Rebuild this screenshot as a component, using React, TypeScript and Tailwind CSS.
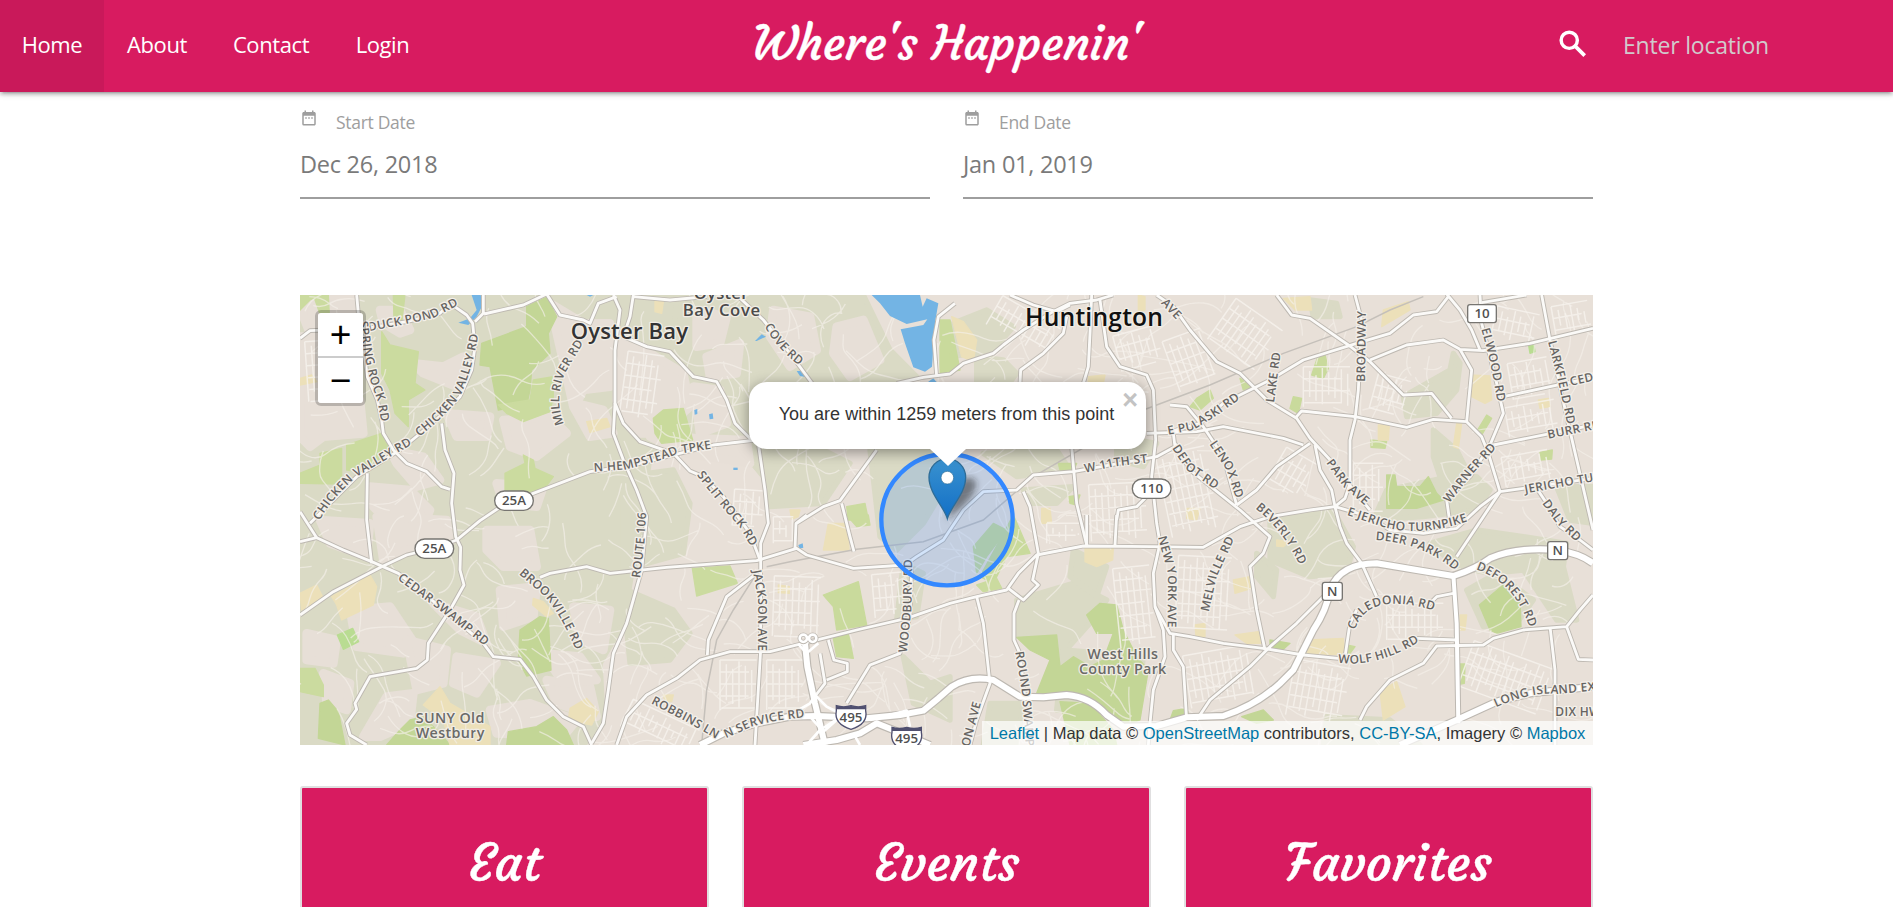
import React from "react";
import { MdDateRange } from "react-icons/md";

/* Map artwork uses a canvas of 3 units per pixel. */

const woods = [
  "30,15 1500,15 1480,200 1380,440 1180,420 1080,500 1060,640 1000,1000 930,1120 940,1300 880,1365 30,1365",
  "1160,15 1720,15 1800,180 1880,260 1700,300 1400,430 1250,260 1150,170",
  "1000,560 1150,540 1200,640 1180,790 1000,840",
  "1330,450 1560,460 1680,520 1600,640 1440,650 1420,560",
  "1740,480 1960,470 1960,600 1900,700 1820,780 1770,740",
  "1990,100 2090,60 2170,110 2110,180 1985,200",
  "2060,200 2140,210 2180,250 2150,290 2060,280",
  "2080,490 2300,480 2340,540 2180,560",
  "2200,600 2350,590 2300,640 2220,640",
  "2180,930 2350,880 2450,930 2400,1000 2310,1100 2290,1030 2180,1040",
  "2320,1080 2560,1100 2540,1270 2300,1260",
  "2350,780 2450,830 2420,920 2340,860",
  "3340,320 3480,240 3490,190 3510,220 3500,300 3440,370 3350,380",
  "3290,600 3480,560 3560,560 3600,600 3560,660 3400,680 3250,690",
  "3430,420 3500,480 3540,560 3460,590 3430,500",
  "2940,690 3130,660 3190,770 3170,850 3060,860 2940,810",
  "3420,760 3560,720 3700,740 3830,760 3820,830 3860,990 3800,990 3700,840 3600,850 3500,830",
  "3110,1280 3300,1290 3390,1365 3100,1365",
  "3530,900 3620,850 3730,930 3680,1000 3580,1010",
  "2900,790 2960,840 2950,920 2900,860",
  "1010,900 1150,960 1200,1030 1140,1110 1020,1120 1010,1020",
  "1840,1100 1920,1180 1980,1160 1980,1290 1870,1240",
  "1840,820 1900,850 1880,980 1820,990",
  "2480,440 2600,460 2560,530 2480,510",
  "3060,30 3140,40 3150,80 3070,80",
  "3800,590 3909,590 3909,700 3840,690",
  "2100,1240 2200,1240 2180,1365 2080,1365",
];

const towns = [
  "40,30 190,20 190,110 60,130 40,80",
  "30,140 90,140 120,250 210,330 220,430 100,440 60,470 30,440",
  "270,60 330,60 360,120 330,130 280,100",
  "370,220 460,230 520,200 540,230 500,290 400,250",
  "300,480 400,500 450,570 380,590 320,520",
  "470,370 600,380 590,440 500,440",
  "640,390 780,380 830,430 740,500 660,470",
  "780,40 880,100 960,100 960,290 880,300 860,340 940,360 970,430 900,440 850,350",
  "240,590 360,600 420,660 400,710 300,700 250,650",
  "90,690 240,700 230,800 120,760",
  "260,680 470,690 480,760 350,780 280,810",
  "590,720 720,720 740,830 640,830 590,780",
  "50,1030 140,1050 130,1120 50,1110",
  "180,960 300,950 380,1070 340,1090 200,1070",
  "350,1050 470,1080 460,1180 380,1200",
  "430,940 560,980 590,1060 510,1020",
  "630,900 740,890 730,980 640,1010",
  "500,1100 620,1120 560,1210 490,1180",
  "100,1150 180,1180 170,1260 110,1240",
  "290,1220 370,1210 360,1300 270,1340 220,1340",
  "600,1260 720,1240 860,1290 820,1340 620,1330",
  "770,1170 900,1190 920,1280 800,1240",
  "850,950 960,960 940,1080 870,1050",
  "990,130 1080,190 1180,250 1200,350 1110,430 1040,430 980,330",
  "1220,60 1310,80 1290,160 1220,170",
  "1250,200 1350,160 1340,250 1260,260",
  "1450,60 1560,80 1580,180 1500,230 1440,140",
  "1640,110 1720,90 1770,210 1680,260 1630,190",
  "1080,440 1370,450 1380,520 1180,490",
  "1210,290 1290,300 1310,400 1230,430",
  "620,580 760,590 740,650 640,640",
  "760,1090 870,1100 920,1170 820,1180",
];

const parks = [
  ["#cbdb9f", "30,60 60,30 90,15 30,15"],
  ["#cbdb9f", "70,15 115,15 118,75 90,72"],
  ["#cbdb9f", "310,15 345,15 335,100 312,95"],
  ["#cbdb9f", "275,125 300,165 385,185 375,280 405,300 355,330 355,410 315,370 300,300 275,250"],
  ["#c3d696", "710,50 770,22 800,80 775,130 780,190 725,240 720,300 710,345 625,360 600,230 570,225 575,160 710,110"],
  ["#cbdb9f", "625,345 720,330 730,270 790,260 790,320 780,365 700,395 650,370"],
  ["#cbdb9f", "170,465 275,430 315,475 210,545 170,540"],
  ["#cbdb9f", "90,490 155,475 155,582 30,580 30,550 90,525"],
  ["#cbdb9f", "645,550 705,520 700,495 730,510 735,535 790,560 760,600 720,605 645,600"],
  ["#b9dc92", "142,1035 188,1015 206,1055 160,1078"],
  ["#cbdb9f", "30,1135 75,1135 100,1185 100,1220 30,1205"],
  ["#c3d696", "90,1240 115,1230 145,1265 165,1365 85,1345"],
  ["#c3d696", "690,1020 750,980 775,985 783,1140 710,1158 685,1110"],
  ["#c3d696", "360,1290 400,1280 440,1320 480,1365 290,1365 330,1320"],
  ["#c3d696", "655,1325 740,1310 790,1280 830,1320 850,1365 650,1365"],
  ["#c9da9c", "1090,385 1120,360 1180,355 1208,450 1115,460 1095,430"],
  ["#cbdb9f", "1207,835 1320,828 1342,880 1220,918"],
  ["#c9da9c", "1600,915 1705,875 1730,1005 1640,1020 1630,950"],
  ["#c9da9c", "1630,1045 1675,1030 1690,1105 1640,1100"],
  ["#cbdb9f", "1670,675 1735,675 1740,705 1700,710"],
  ["#cbdb9f", "1670,650 1725,640 1735,690 1675,690"],
  ["#c9da9c", "1950,90 1980,90 2010,240 1950,250"],
  ["#c9da9c", "2170,675 2220,790 2150,800 2110,880 2070,860"],
  ["#c9da9c", "2050,770 2110,700 2150,720 2090,800 2060,850"],
  ["#cbdb9f", "2060,885 2120,865 2135,895 2080,905"],
  ["#c3d696", "2180,1042 2300,1035 2310,1130 2350,1100 2400,1130 2440,1110 2470,1030 2420,1030 2390,975 2430,940 2480,945 2500,1020 2540,1100 2575,1140 2550,1290 2500,1310 2400,1230 2240,1210 2280,1110 2220,1080"],
  ["#c3d696", "2310,1235 2400,1240 2470,1320 2480,1365 2340,1365"],
  ["#c9da9c", "2720,325 2760,300 2770,325 2730,360 2700,350"],
  ["#c9da9c", "2850,265 2885,290 2860,300"],
  ["#c9da9c", "2305,520 2360,520 2350,545 2310,540"],
  ["#c9da9c", "2335,620 2370,615 2360,645 2340,640"],
  ["#c9da9c", "3085,195 3105,195 3115,235 3100,265 3065,255"],
  ["#c9da9c", "3010,320 3035,325 3025,370 3000,355"],
  ["#c9da9c", "3590,375 3605,385 3575,435 3560,425"],
  ["#b9dc92", "3715,160 3730,155 3735,185 3720,190"],
  ["#c3d696", "3290,555 3315,555 3320,590 3390,590 3415,560 3440,610 3460,630 3380,655 3290,655"],
  ["#c9da9c", "3243,450 3290,455 3285,475 3243,472"],
  ["#c9da9c", "3750,487 3787,480 3785,507 3752,510"],
  ["#c3d696", "3568,945 3640,885 3690,940 3693,1010 3620,1030 3600,1020"],
  ["#c9da9c", "3508,1122 3525,1122 3523,1180 3508,1183"],
  ["#c9da9c", "3170,1065 3195,1070 3180,1090 3165,1090"],
  ["#c3d696", "2940,1050 3000,1060 2980,1078 2940,1078"],
  ["#c3d696", "2650,1262 2690,1255 2700,1290 2640,1290"],
  ["#c3d696", "2855,1280 2920,1260 2950,1290 2900,1300"],
  ["#c9da9c", "1980,150 1990,180 1980,200"],
  ["#ece0b9", "30,265 65,255 80,275 30,285"],
  ["#ece0b9", "890,395 950,385 960,410 900,428"],
  ["#ece0b9", "30,910 80,885 100,925 35,960"],
  ["#ece0b9", "125,920 240,855 260,890 250,945 155,990 140,945"],
  ["#ece0b9", "400,1245 450,1190 480,1240 600,1310 600,1365 480,1365 460,1290"],
  ["#ece0b9", "730,925 760,935 790,970 770,980 728,945"],
  ["#ece0b9", "840,1255 890,1225 925,1265 905,1305 835,1290"],
  ["#ece0b9", "1095,25 1120,35 1115,70 1095,65"],
  ["#ece0b9", "1615,700 1675,700 1677,780 1600,780"],
  ["#ece0b9", "1465,885 1498,890 1498,910 1465,908"],
  ["#ece0b9", "1500,660 1530,660 1525,680 1505,688"],
  ["#ece0b9", "1120,1215 1150,1215 1145,1235 1125,1235"],
  ["#ece0b9", "1985,80 2020,95 2060,150 2050,215 2015,200"],
  ["#ece0b9", "2545,15 2565,20 2565,60 2545,65"],
  ["#ece0b9", "2395,260 2445,255 2440,280 2395,280"],
  ["#ece0b9", "2385,775 2470,775 2468,810 2420,830 2385,815"],
  ["#ece0b9", "2255,655 2280,655 2285,700 2255,700"],
  ["#ece0b9", "2690,655 2730,655 2720,690 2690,685"],
  ["#ece0b9", "2830,870 2880,860 2885,895 2835,910"],
  ["#ece0b9", "2715,1005 2745,1000 2745,1040 2718,1040"],
  ["#ece0b9", "2835,1035 2905,1025 2915,1060 2870,1060"],
  ["#ece0b9", "2980,25 3060,20 3065,60 3015,60"],
  ["#ece0b9", "3280,60 3355,35 3360,60 3275,110"],
  ["#ece0b9", "3540,255 3600,258 3605,330 3585,340 3545,320"],
  ["#ece0b9", "3265,405 3298,405 3295,450 3265,450"],
  ["#ece0b9", "3500,400 3515,400 3505,475 3490,470"],
  ["#ece0b9", "3745,330 3775,325 3780,350 3750,355"],
  ["#ece0b9", "3055,1050 3160,1045 3165,1095 3050,1090"],
  ["#ece0b9", "3510,975 3530,975 3525,1020 3510,1020"],
  ["#ece0b9", "3270,1205 3320,1175 3345,1250 3280,1290"],
  ["#ece0b9", "2960,750 2995,755 2980,770 2960,768"],
];

const water = [
  "1745,15 1890,15 1898,50 1910,25 1945,40 1936,92 1926,230 1905,245 1870,232 1845,160 1832,118 1900,105 1912,88 1850,102 1800,78 1770,40",
  "545,15 572,15 578,45 560,80 535,105 505,98 540,85 560,60",
  "1395,153 1415,133 1428,140 1400,153",
  "1520,243 1538,243 1550,262 1530,258",
  "1213,360 1222,357 1222,372 1214,374",
  "1257,373 1268,370 1270,386 1259,388",
  "1330,533 1343,533 1343,540 1330,540",
  "1525,765 1538,760 1540,773 1528,776",
  "1915,275 1930,265 1943,280 1920,285",
  "890,15 910,15 900,20",
];

const roads = [
  "M200 15L205 70L215 130L232 260L262 330L275 390L280 430L310 480L350 520L410 545L455 590L480 598",
  "M30 145L60 122L230 115L350 95L450 70L480 40L530 75L548 100L555 170L545 240L510 320L460 370L385 435L330 480L200 560L120 640L60 700",
  "M30 755L80 743L30 665",
  "M80 743L160 780L245 815L325 850L450 950L580 1060L610 1100L690 1108L730 1160L770 1230L820 1280L880 1310L905 1365",
  "M232 550L230 690L245 820",
  "M30 975L130 905L275 830L350 795L430 775L500 750L570 692L640 645L730 610L900 545L1010 530L1130 500L1270 465L1400 450",
  "M455 400L465 480L492 550L485 640L497 740L512 772L510 840L522 885L480 960L415 1060L412 1110L380 1135L240 1160L195 1240L200 1258L170 1300L180 1335L230 1365",
  "M580 15L580 70L555 95M582 72L700 45L770 12L810 75L880 90L900 100L925 40L980 20",
  "M970 15L990 60L975 180L975 340L1000 400L1050 455L1150 490L1200 543L1240 560L1300 620L1380 730L1410 810",
  "M975 340L970 430L1000 510L1040 600L1070 680L1055 840L1010 1000L970 1090L955 1200L940 1300L905 1360",
  "M1030 15L1020 80L1000 140L1070 170L1140 185L1210 260L1280 275L1310 330L1335 400L1380 445L1405 460L1425 600L1435 700L1412 760L1412 1080L1395 1365",
  "M1030 20L1140 30L1250 20",
  "M750 862L780 850L890 830L960 850L1130 832L1400 812L1520 775L1550 795L1690 835L1845 825L1880 800L1960 750L2020 660L2080 605L2180 600L2230 555L2350 545L2600 500L2655 470L2650 430",
  "M1400 850L1310 920L1255 1050L1252 1095",
  "M980 1365L1010 1280L1070 1215L1160 1165L1230 1110L1320 1085L1440 1085L1560 1055L1700 1020L1850 985L1980 940L2060 920L2150 900L2185 850L2240 795L2380 768L2590 770L2740 772L2850 710L2940 680L3060 660L3135 650L3240 680L3300 720L3400 730L3500 715L3570 650L3630 605L3700 595L3909 565",
  "M1340 15L1420 90L1500 190L1570 285",
  "M1520 700L1600 650L1650 632L1760 480M1655 640L1680 740L1692 785M1515 775L1518 700L1550 675",
  "M1940 260L1932 150L1945 80L1995 40M1820 280L1900 262L1980 252L2020 220L2110 190L2140 165L2200 120L2280 70L2340 40L2420 30L2470 15",
  "M2160 15L2230 45L2300 65L2340 45M2405 15L2400 130L2395 230L2380 280M2330 80L2320 130L2260 190L2192 240L2190 280",
  "M2430 30L2450 170L2490 230L2570 255L2590 300L2597 450L2585 560L2600 700L2610 760L2590 850L2595 950L2620 1020L2625 1100L2590 1200L2580 1300L2575 1365",
  "M2345 470L2360 640L2390 765M2200 605L2220 650L2245 790L2228 870L2245 885L2200 930L2155 895",
  "M2570 430L2720 425L2800 410L2980 445L3040 465",
  "M2600 15L2650 50L2700 120L2780 215L2850 250L2930 330L3020 385L3060 445L3130 520L3190 600L3240 660",
  "M2640 425L2730 400L2800 340L2900 290L2940 270L3040 210L3200 160L3300 130L3370 75L3440 65L3475 20",
  "M3470 12L3510 60L3545 120L3570 180M3240 210L3350 165L3460 150L3510 178L3580 182L3720 160L3909 115",
  "M3510 178L3545 240L3530 395",
  "M2960 15L3005 75L3060 85L3175 165L3240 215L3340 315L3425 310L3485 385",
  "M3015 385L3035 363L3195 380L3350 412L3430 388L3530 395L3575 440L3595 490L3630 605",
  "M3195 15L3215 90L3205 300L3195 390L3180 450L3180 580L3165 625L3135 650",
  "M3075 465L3090 540L3125 600L3135 650L3150 710L3170 760L3215 820L3260 920",
  "M3570 15L3575 100L3620 280L3640 370L3600 465L3540 560L3470 630L3480 700",
  "M3755 15L3780 150L3830 380L3909 720M3640 320L3909 262M3595 468L3909 405M3575 38L3710 15",
  "M3740 595L3770 640L3810 710L3870 750L3909 780M3630 605L3580 680L3500 800",
  "M2640 345L2690 350L2740 410L2800 500L2840 645M2655 460L2700 540L2800 620L2850 660L2940 740L2920 790L2880 830L2900 960L2925 1080",
  "M2840 645L2900 600L2960 530L3060 460M2480 690L2485 660L2540 650L2590 600",
  "M2187 930L2172 970L2172 1050L2190 1090L2205 1230",
  "M2060 920L2080 1000L2100 1180L2060 1290L2040 1365M2390 675L2390 765M2480 675L2475 765",
  "M2595 950L2640 1030L2700 1040L2800 1060L2920 1075L3040 1095L3145 1105",
  "M2650 1030L2650 1080L2680 1130L2690 1290M2720 1290L2760 1230L2880 1130L2940 1070L3020 1000L3100 920",
  "M3165 1100L3180 1000L3200 960M3410 950L3440 920L3490 910M3380 1045L3500 1050",
  "M3210 1290L3230 1250L3300 1170L3400 1120L3440 1068L3580 1065L3610 1045L3700 1020L3830 1010L3870 960L3909 915M3780 1010L3795 1140L3795 1365M3830 1010L3865 1108L3909 1110",
  "M1865 830L1860 980L1830 1090L1740 1125L1670 1240M1615 1050L1632 1110L1672 1120L1672 1145L1610 1170M1590 1090L1605 1180L1570 1225",
];

const highways = [
  "M1230 1365L1300 1330L1400 1300L1500 1280L1580 1278L1730 1285L1830 1275L1900 1262L1945 1225L1985 1190Q2040 1155 2110 1170L2190 1220L2260 1222L2330 1215Q2400 1220 2450 1275L2500 1310L2600 1308L2690 1282L2800 1278Q2900 1245 2970 1180L3010 1140L3070 1020Q3110 960 3120 900Q3150 820 3260 820L3380 840L3490 858Q3560 835 3600 805Q3680 770 3800 780Q3870 790 3909 820",
  "M1545 1060L1552 1130L1575 1240L1605 1365",
  "M3330 1365L3500 1290L3620 1235L3720 1210L3909 1190",
  "M1540 1365L1640 1350L1710 1330L1760 1300L1860 1340L1920 1365",
  "M3490 855L3500 1000L3505 1300",
];

const rails = [
  "M2560 360L2760 285L2980 190L3200 110L3300 60L3400 20",
  "M1400 850L1330 960L1280 1050L1250 1200L1235 1365",
  "M1430 830L1500 815L1700 778L1900 755L2080 690L2230 560L2560 370",
];

type Label = { t: string; d: string };
const streetLabels: Label[] = [
  { t: "DUCK POND RD", d: "M236 124L330 106L430 84L530 32" },
  { t: "SPRING ROCK RD", d: "M208 95L222 190L240 270L262 330L276 410" },
  { t: "CHICKEN VALLEY RD", d: "M388 440Q460 385 510 320Q548 240 567 120" },
  { t: "CHICKEN VALLEY RD", d: "M88 692Q130 620 200 560L380 455" },
  { t: "MILL RIVER RD", d: "M822 402Q790 320 830 240L885 150" },
  { t: "N HEMPSTEAD TPKE", d: "M912 545L1010 538Q1120 510 1160 492L1290 472" },
  { t: "COVE RD", d: "M1424 108Q1460 180 1548 242" },
  { t: "SPLIT ROCK RD", d: "M1220 555L1300 655L1352 715L1405 810" },
  { t: "ROUTE 106", d: "M1050 865L1062 770L1070 640" },
  { t: "BROOKVILLE RD", d: "M686 852L760 915Q820 980 865 1100" },
  { t: "CEDAR SWAMP RD", d: "M322 868L450 962L610 1088" },
  { t: "JACKSON AVE", d: "M1388 842L1403 920L1403 1110" },
  { t: "ROBBINS LN", d: "M1082 1240L1180 1290L1310 1365" },
  { t: "N SERVICE RD", d: "M1308 1345L1390 1308L1460 1292L1570 1278" },
  { t: "WOODBURY RD", d: "M1850 1088L1864 960L1867 780" },
  { t: "W 11TH ST", d: "M2386 548L2470 530L2600 514" },
  { t: "E PULASKI RD", d: "M2635 434L2710 420L2790 370L2890 298" },
  { t: "LAKE RD", d: "M2952 338L2974 170" },
  { t: "DEPOT RD", d: "M2646 474L2690 540L2805 618" },
  { t: "LENOX RD", d: "M2758 462L2810 540L2846 650" },
  { t: "PARK AVE", d: "M3108 518L3160 590L3240 660" },
  { t: "BROADWAY", d: "M3225 275L3228 50" },
  { t: "ELWOOD RD", d: "M3574 118Q3605 220 3624 350" },
  { t: "LARKFIELD RD", d: "M3774 155Q3810 290 3837 430" },
  { t: "CED", d: "M3842 287L3960 262" },
  { t: "BURR RD", d: "M3775 446L3960 410" },
  { t: "JERICHO TURNPIKE", d: "M3706 610L3830 588L4080 545" },
  { t: "DALY RD", d: "M3756 640L3800 700L3880 775" },
  { t: "WARNER RD", d: "M3478 640L3540 560L3630 462" },
  { t: "E JERICHO TURNPIKE", d: "M3170 675L3270 708Q3400 750 3580 676" },
  { t: "DEER PARK RD", d: "M3256 750Q3410 760 3510 855" },
  { t: "BEVERLY RD", d: "M2896 655Q2990 730 3040 850" },
  { t: "AVE", d: "M2612 40L2680 112" },
  { t: "NEW YORK AVE", d: "M2604 742L2634 850L2633 1030" },
  { t: "MELVILLE RD", d: "M2756 966L2780 860L2840 730" },
  { t: "CALEDONIA RD", d: "M3195 1020Q3230 905 3420 958" },
  { t: "DEFOREST RD", d: "M3558 838Q3680 880 3720 1020" },
  { t: "WOLF HILL RD", d: "M3144 1118Q3270 1135 3410 1040" },
  { t: "LONG ISLAND EXPY", d: "M3618 1252Q3720 1205 3800 1212L4040 1190" },
  { t: "DIX HWY", d: "M3796 1277L4000 1277" },
  { t: "ROUND SWAMP", d: "M2176 1086L2195 1200L2210 1400" },
  { t: "ON AVE", d: "M2038 1372L2078 1220" },
];

/* Deterministic generator for the faint residential street texture. */
function makeRandom(seed: number) {
  let s = seed;
  return () => {
    s = (s * 16807) % 2147483647;
    return s / 2147483647;
  };
}

function localStreets() {
  const rnd = makeRandom(4217);
  let d = "";
  for (let i = 0; i < 560; i++) {
    let x = 30 + rnd() * 3880;
    let y = 15 + rnd() * 1350;
    let a = rnd() * 6.28;
    d += `M${x.toFixed(0)} ${y.toFixed(0)}`;
    const n = 2 + Math.floor(rnd() * 3);
    for (let k = 0; k < n; k++) {
      const l = 14 + rnd() * 26;
      const x1 = x + Math.cos(a) * l;
      const y1 = y + Math.sin(a) * l;
      a += (rnd() - 0.5) * 1.8;
      x = x1 + Math.cos(a) * l;
      y = y1 + Math.sin(a) * l;
      d += `Q${x1.toFixed(0)} ${y1.toFixed(0)} ${x.toFixed(0)} ${y.toFixed(0)}`;
    }
  }
  return d;
}

/* x, y, width, height, rotation of each street grid */
const grids = [
  [50, 150, 150, 180, -4],
  [1000, 190, 110, 200, 8],
  [1450, 860, 140, 180, 2],
  [1290, 1110, 110, 150, 0],
  [1430, 1110, 110, 150, 0],
  [1000, 1270, 220, 90, 25],
  [1330, 600, 90, 110, 4],
  [1450, 680, 60, 80, 0],
  [2100, 60, 200, 100, 30],
  [2480, 120, 130, 110, -15],
  [2640, 130, 120, 160, -20],
  [2420, 300, 150, 130, 5],
  [2400, 580, 170, 170, -3],
  [2620, 480, 150, 250, -12],
  [2480, 830, 110, 240, -6],
  [2660, 800, 160, 220, 3],
  [2690, 1080, 190, 160, -10],
  [2780, 60, 170, 150, 35],
  [3040, 230, 140, 120, 0],
  [3250, 260, 100, 110, 15],
  [3190, 520, 90, 150, 0],
  [3610, 60, 130, 100, 12],
  [3790, 40, 110, 90, -10],
  [3660, 210, 120, 110, -10],
  [3650, 340, 150, 90, -10],
  [3640, 490, 140, 90, -10],
  [2950, 490, 110, 130, 30],
  [3520, 1090, 250, 150, 20],
  [3290, 940, 170, 110, 0],
  [3000, 1120, 170, 170, 10],
  [2270, 700, 110, 60, 0],
  [1750, 850, 90, 130, -5],
];

function gridPath(w: number, h: number) {
  let d = "";
  for (let x = 0, i = 0; x <= w; x += 19, i++) d += `M${x} ${(i * 13) % 35}V${h - ((i * 29) % 40)}`;
  for (let y = 0, i = 0; y <= h; y += 36, i++) d += `M${(i * 31) % 30} ${y}H${w - ((i * 23) % 45)}`;
  return d;
}

function RouteShield({ x, y, t, round }: { x: number; y: number; t: string; round?: boolean }) {
  const w = round ? 116 : t.length > 1 ? 86 : 60;
  const h = round ? 58 : 54;
  return (
    <g transform={`translate(${x} ${y})`}>
      <rect x={-w / 2} y={-h / 2} width={w} height={h} rx={round ? 29 : 7} fill="#fff" stroke="#777571" strokeWidth="4" />
      <text y="14" textAnchor="middle" fontSize="40" fontWeight="600" fill="#505050">{t}</text>
    </g>
  );
}

function Interstate({ x, y }: { x: number; y: number }) {
  return (
    <g transform={`translate(${x} ${y})`}>
      <path d="M-44 -33Q-22 -26 0 -33Q22 -26 44 -33V-18Q52 22 0 38Q-52 22 -44 -18Z" fill="#fff" stroke="#505070" strokeWidth="4" />
      <path d="M-44 -33Q-22 -26 0 -33Q22 -26 44 -33V-22H-44Z" fill="#505070" />
      <text y="15" textAnchor="middle" fontSize="40" fontWeight="600" fill="#505050">495</text>
    </g>
  );
}

function MapCanvas() {
  return (
    <svg viewBox="30 15 3879 1350" className="block h-[450px] w-[1293px] font-['Open_Sans','Noto_Sans',sans-serif]">
      <defs>
        {streetLabels.map(({ d }, i) => <path key={i} id={`street-${i}`} d={d} />)}
        <linearGradient id="pin" x1="0" y1="0" x2="0" y2="1">
          <stop offset="0" stopColor="#3a92cf" />
          <stop offset="1" stopColor="#126fc6" />
        </linearGradient>
        <filter id="soft" x="-50%" y="-50%" width="200%" height="200%">
          <feGaussianBlur stdDeviation="9" />
        </filter>
      </defs>
      <rect x="30" y="15" width="3879" height="1350" fill="#e8e0d8" />
      <g fill="#dadac5" stroke="#dadac5" strokeWidth="16" strokeLinejoin="round">
        {woods.map((p, i) => <polygon key={i} points={p} />)}
      </g>
      <g fill="#e7dfd7" stroke="#e7dfd7" strokeWidth="26" strokeLinejoin="round">
        {towns.map((p, i) => <polygon key={i} points={p} />)}
      </g>
      {parks.map(([c, p], i) => <polygon key={i} points={p} fill={c} stroke={c} strokeWidth="4" strokeLinejoin="round" />)}
      <path d={localStreets()} fill="none" stroke="#f4f0ea" strokeWidth="4" strokeOpacity=".65" />
      <g fill="none" stroke="#f6f2ee" strokeWidth="4.5" strokeOpacity=".8">
        {grids.map(([x, y, w, h, r], i) => (
          <path key={i} transform={`translate(${x} ${y}) rotate(${r} ${w / 2} ${h / 2})`} d={gridPath(w, h)} />
        ))}
      </g>
      {water.map((p, i) => <polygon key={i} points={p} fill="#73b4e4" />)}
      <g fill="none" stroke="#c5c0ba" strokeWidth="4.5">
        {rails.map((d, i) => <path key={i} d={d} />)}
      </g>
      <g fill="none" strokeLinejoin="round">
        {roads.map((d, i) => <path key={i} d={d} stroke="#bdb8b1" strokeWidth="14" />)}
        {highways.map((d, i) => <path key={i} d={d} stroke="#bdb8b1" strokeWidth={i === 4 ? 18 : 25} />)}
        {roads.map((d, i) => <path key={i} d={d} stroke="#fbfaf8" strokeWidth="8.5" />)}
        {highways.map((d, i) => <path key={i} d={d} stroke="#fff" strokeWidth={i === 4 ? 12 : 18} />)}
        <circle cx="1540" cy="1045" r="11" stroke="#bdb8b1" strokeWidth="13" />
        <circle cx="1568" cy="1045" r="11" stroke="#bdb8b1" strokeWidth="13" />
        <g stroke="#fff" strokeWidth="8">
          <circle cx="1540" cy="1045" r="11" />
          <circle cx="1568" cy="1045" r="11" />
          <path d="M1525 1062L1550 1090L1585 1060M1500 1275L1560 1240L1575 1215L1610 1250L1660 1275L1590 1320L1550 1365M1560 1280L1600 1325L1640 1290M1740 1290L1850 1262L1860 1310M1690 1330L1710 1365" />
        </g>
      </g>
      <g fontSize="36" fontWeight="600" letterSpacing="1" fill="#666462" stroke="#f3efe9" strokeWidth="8" strokeLinejoin="round" paintOrder="stroke">
        {streetLabels.map(({ t }, i) => (
          <text key={i}>
            <textPath href={`#street-${i}`}>{t}</textPath>
          </text>
        ))}
      </g>
      <g textAnchor="middle" fontWeight="600" stroke="#f0ece4" strokeWidth="8" strokeLinejoin="round" paintOrder="stroke">
        <g fontSize="50" fill="#4a4a4a">
          <text x="1293" y="27" textLength="164">Oyster</text>
          <text x="1294" y="79" textLength="232">Bay Cove</text>
        </g>
        <text x="1018" y="147" fontSize="66" fill="#333" textLength="352">Oyster Bay</text>
        <text x="2412" y="109" fontSize="74" fill="#111" textLength="414">Huntington</text>
        <g fontSize="43" fill="#6a6a68">
          <text x="480" y="1300" textLength="206">SUNY Old</text>
          <text x="480" y="1345" textLength="206">Westbury</text>
          <text x="2498" y="1108" textLength="212">West Hills</text>
          <text x="2498" y="1153" textLength="262">County Park</text>
        </g>
      </g>
      <RouteShield x={672} y={632} t="25A" round />
      <RouteShield x={433} y={776} t="25A" round />
      <RouteShield x={2585} y={596} t="110" round />
      <RouteShield x={3576} y={71} t="10" />
      <RouteShield x={3127} y={904} t="N" />
      <RouteShield x={3803} y={782} t="N" />
      <Interstate x={1683} y={1280} />
      <Interstate x={1850} y={1345} />
      <circle cx="1971" cy="689" r="197" fill="#3388ff" fillOpacity=".2" stroke="#3388ff" strokeWidth="13" />
      <path d="M1972 690L1995 600Q2025 545 2055 570Q2068 600 2022 645Z" fill="#222" fillOpacity=".5" filter="url(#soft)" />
      <path d="M1972 686C1962 650 1917 610 1917 562A55 56 0 0 1 2027 562C2027 610 1982 650 1972 686Z" fill="url(#pin)" stroke="#2e6c97" strokeWidth="4" />
      <circle cx="1972" cy="563" r="19" fill="#fff" stroke="#2e6c97" strokeWidth="2" />
    </svg>
  );
}

const navItems = [
  { label: "Home", cls: "w-[104px] bg-[#c9195a]" },
  { label: "About", cls: "w-[106px]" },
  { label: "Contact", cls: "w-[122px]" },
  { label: "Login", cls: "w-[101px]" },
];

function DateField({ label, value }: { label: string; value: string }) {
  return (
    <div className="h-[107px] w-[630px] border-b-2 border-[#9e9e9e]">
      <div className="flex h-[46px] pt-[17px] text-[#9e9e9e]">
        <MdDateRange className="size-[18px]" />
        <span className="ml-[18px] whitespace-nowrap text-[17.5px] leading-[27px] tracking-[-0.3px]">{label}</span>
      </div>
      <div className="text-[23.5px] leading-[52px] tracking-[-0.25px] text-[#7a7a7a]">{value}</div>
    </div>
  );
}

const link = "text-[#0078a8]";

export default function App() {
  return (
    <div className="h-[907px] overflow-hidden bg-white font-['Open_Sans','Noto_Sans',sans-serif]">
      <nav className="relative grid h-[92px] grid-cols-[754px_391px_1fr] bg-[#d81b60] text-white shadow-[0_3px_3px_rgba(0,0,0,0.14),0_4.5px_1.5px_-3px_rgba(0,0,0,0.12),0_1.5px_7.5px_rgba(0,0,0,0.2)]">
        <div className="flex">
          {navItems.map((n) => (
            <a key={n.label} className={`${n.cls} flex items-center justify-center pb-[4px] text-[22px] tracking-[-0.4px]`}>{n.label}</a>
          ))}
        </div>
        <div className="flex items-center justify-center whitespace-nowrap pb-[5px] pr-[6px] font-['Courgette',cursive] text-[47.2px] leading-none [-webkit-text-stroke:0.4px_white]">
          Where's Happenin'
        </div>
        <div className="flex items-center pl-[410px]">
          <svg viewBox="0 0 24 24" className="mt-[-5px] size-9" fill="none" stroke="currentColor" strokeWidth="2.3">
            <circle cx="9.5" cy="9.5" r="5.4" />
            <path d="M13.8 13.8L19.8 19.8" strokeWidth="2.5" />
          </svg>
          <span className="ml-[32px] mt-[-2px] text-[23px] tracking-[-0.2px] text-[#d1c9cc]">Enter location</span>
        </div>
      </nav>

      <main className="mx-auto w-[1293px]">
        <section className="flex justify-between">
          <DateField label="Start Date" value="Dec 26, 2018" />
          <DateField label="End Date" value="Jan 01, 2019" />
        </section>

        <section className="relative mt-[96px] h-[450px] overflow-hidden font-['Liberation_Sans',Arial,sans-serif]">
          <MapCanvas />
          <div className="absolute left-[15px] top-[15px] flex w-[51px] flex-col rounded-[6px] border-[3px] border-black/20 bg-clip-padding text-center text-[37px] text-black">
            <button className="h-[45px] rounded-t-[3px] border-b-2 border-[#ccc] bg-white leading-[42px]">+</button>
            <button className="h-[45px] rounded-b-[3px] bg-white leading-[44px]">−</button>
          </div>
          <div className="absolute left-[449px] top-[87px] flex w-[397px] flex-col items-center">
            <div className="relative flex h-[67px] w-full items-center justify-center rounded-[18px] bg-white pb-[2px] pr-[2px] text-[18px] text-[#333] shadow-[0_3px_14px_rgba(0,0,0,0.4)]">
              <span className="whitespace-nowrap">You are within 1259 meters from this point</span>
              <span className="absolute right-[8px] top-[5px] text-[27px] font-bold leading-[27px] text-[#c3c3c3]">×</span>
            </div>
            <svg className="relative h-[17px] w-[36px]" viewBox="0 0 36 17"><path d="M0 0H36L18 17Z" fill="#fff" /></svg>
          </div>
          <div className="absolute bottom-0 right-0 flex h-[24px] w-[611px] items-center justify-center whitespace-pre bg-white/70 text-[16.5px] text-[#333]">
            <span className={link}>Leaflet</span> | Map data © <span className={link}>OpenStreetMap</span> contributors, <span className={link}>CC-BY-SA</span>, Imagery © <span className={link}>Mapbox</span>
          </div>
        </section>

        <section className="mt-[41px] flex justify-between">
          {["Eat", "Events", "Favorites"].map((t) => (
            <div key={t} className="flex h-[180px] w-[409px] justify-center rounded-[3px] border-2 border-[#e0dfe0] bg-[#d81b60] pt-[45px] font-['Courgette',cursive] text-[51.2px] leading-[60px] text-white [-webkit-text-stroke:0.4px_white]">
              {t}
            </div>
          ))}
        </section>
      </main>
    </div>
  );
}
